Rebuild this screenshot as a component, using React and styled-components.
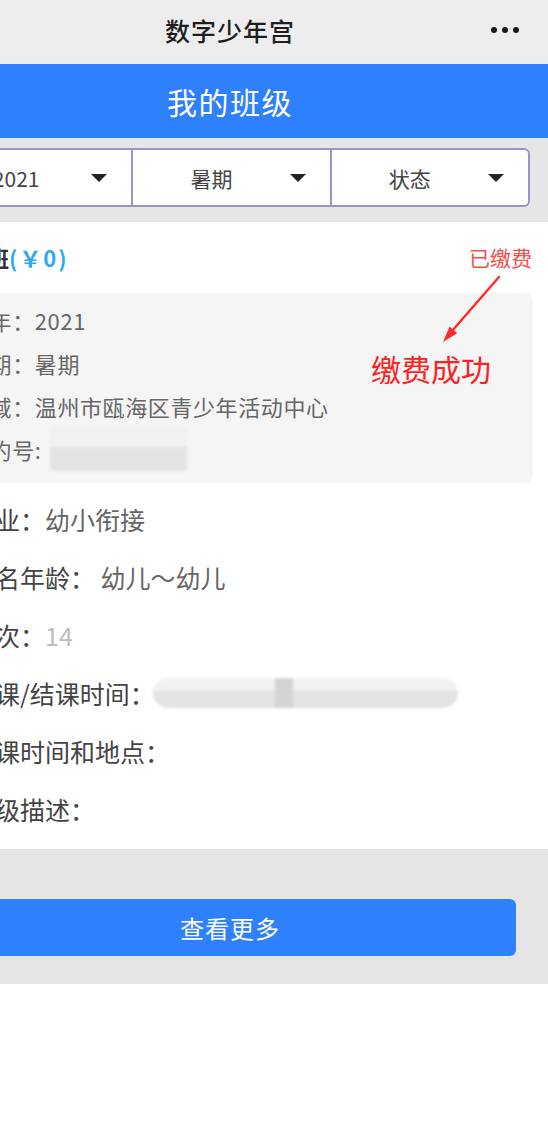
import React from 'react'
import styled, { createGlobalStyle } from 'styled-components'

const GlobalStyle = createGlobalStyle`
    body{
        margin:0;
        background:#ffffff;
        font-family:"Noto Sans CJK SC","Noto Sans",sans-serif;
    }
`

const infoRows = [
    { label: '学年：', value: '2021' },
    { label: '学期：', value: '暑期' },
    { label: '区域：', value: '温州市瓯海区青少年活动中心' },
    { label: '预约号:', value: null },
]

const detailRows = [
    { label: '专业：', value: '幼小衔接' },
    { label: '报名年龄：', value: ' 幼儿～幼儿' },
    { label: '课次：', value: '14', light: true },
    { label: '开课/结课时间：', blur: true },
    { label: '上课时间和地点：' },
    { label: '班级描述：' },
]

const filters = ['2021', '暑期', '状态']

function App() {
    return (
        <Viewport>
            <GlobalStyle />
            <Page>
                <TitleBar>
                    <span />
                    <h1>数字少年宫</h1>
                    <Dots><i /><i /><i /></Dots>
                </TitleBar>
                <Header>我的班级</Header>
                <FilterArea>
                    <FilterBox>
                        {filters.map((f) => (
                            <FilterCell key={f}>
                                <span>{f}</span>
                                <Caret />
                            </FilterCell>
                        ))}
                    </FilterBox>
                </FilterArea>
                <Card>
                    <CardHead>
                        <h2>暑期班<em>(￥0)</em></h2>
                        <Status>已缴费</Status>
                    </CardHead>
                    <InfoBox>
                        {infoRows.map((r) => (
                            <InfoRow key={r.label}>
                                <span>{r.label}</span>
                                {r.value ? <span>{r.value}</span> : <Mosaic $w={137} $h={44} />}
                            </InfoRow>
                        ))}
                    </InfoBox>
                    <Details>
                        {detailRows.map((r) => (
                            <DetailRow key={r.label}>
                                <span>{r.label}</span>
                                {r.value && <Value $light={r.light}>{r.value}</Value>}
                                {r.blur && <Mosaic $w={305} $h={30} $round $mark />}
                            </DetailRow>
                        ))}
                    </Details>
                    <ArrowMark viewBox="0 0 80 80" width="80" height="80">
                        <line x1="67" y1="5" x2="20" y2="59" stroke="#ff2a2a" strokeWidth="2.4" strokeLinecap="round" />
                        <polygon points="11,70 25.2,61.3 17.6,54.6" fill="#ff2a2a" />
                    </ArrowMark>
                    <Note>缴费成功</Note>
                </Card>
                <Footer>
                    <MoreButton>查看更多</MoreButton>
                </Footer>
            </Page>
        </Viewport>
    )
}

const Viewport = styled.div`
    width:548px;
    height:1121px;
    overflow:hidden;
    background:#ffffff;
`
const Page = styled.div`
    width:636px;
    margin-left:-88px;
`
const TitleBar = styled.div`
    height:64px;
    background:#ededed;
    display:grid;
    grid-template-columns:1fr auto 1fr;
    align-items:center;
    h1{
        margin:0 0 5px 0;
        font-size:25px;
        font-weight:500;
        color:#1e1e1e;
        letter-spacing:1px;
    }
`
const Dots = styled.div`
    justify-self:end;
    margin:0 29px 5px 0;
    display:flex;
    gap:5px;
    i{
        width:6px;
        height:6px;
        border-radius:50%;
        background:#1a1a1a;
    }
`
const Header = styled.div`
    height:74px;
    background:#2f80fc;
    color:#ffffff;
    display:flex;
    align-items:center;
    justify-content:center;
    font-size:30px;
    letter-spacing:1.5px;
`
const FilterArea = styled.div`
    background:#e6e6e6;
    padding:10px 18px 15px 19px;
`
const FilterBox = styled.div`
    height:59px;
    box-sizing:border-box;
    background:#ffffff;
    border:2px solid #9896c8;
    border-radius:6px;
    display:grid;
    grid-template-columns:repeat(3, 1fr);
`
const FilterCell = styled.div`
    display:flex;
    align-items:center;
    padding-right:24px;
    &:first-child{
        padding-left:8px;
    }
    & + &{
        border-left:2px solid #9896c8;
    }
    span{
        flex:1;
        text-align:center;
        font-size:21px;
        color:#444;
    }
`
const Caret = styled.div`
    width:0;
    height:0;
    border-left:8px solid transparent;
    border-right:8px solid transparent;
    border-top:8px solid #222;
`
const Card = styled.div`
    position:relative;
    background:#ffffff;
    padding:20px 15px 11px 15px;
`
const CardHead = styled.div`
    display:flex;
    justify-content:space-between;
    align-items:center;
    height:30px;
    padding-left:16px;
    h2{
        margin:0;
        font-size:22px;
        font-weight:700;
        color:#333;
        em{
            font-style:normal;
            color:#2ea8f2;
            letter-spacing:2px;
        }
    }
`
const Status = styled.span`
    font-size:21px;
    color:#f0504c;
    margin-right:1px;
`
const InfoBox = styled.div`
    margin-top:21px;
    background:#f5f5f5;
    border-radius:8px;
    padding:5px 0 13px 40px;
`
const InfoRow = styled.div`
    height:43px;
    display:flex;
    align-items:center;
    font-size:22px;
    letter-spacing:0.6px;
    color:#666;
    & > div{
        margin-left:8px;
    }
`
const Mosaic = styled.div`
    width:${props => props.$w}px;
    height:${props => props.$h}px;
    border-radius:${props => props.$round ? '15px' : '4px'};
    filter:blur(1.5px);
    background:
        ${props => props.$mark ? 'linear-gradient(90deg, transparent 40%, #d4d4d4 40%, #d4d4d4 46%, transparent 46%),' : ''}
        linear-gradient(180deg, #f1f1f1 0%, #f1f1f1 45%, #e3e3e3 45%, #e3e3e3 100%);
`
const Details = styled.div`
    margin-top:7px;
    padding-left:43px;
`
const DetailRow = styled.div`
    height:58px;
    display:flex;
    align-items:center;
    font-size:25px;
    color:#444;
    white-space:pre;
    & > div{
        margin-left:-2px;
    }
`
const Value = styled.span`
    color:${props => props.$light ? '#bdbdbd' : '#666'};
`
const ArrowMark = styled.svg`
    position:absolute;
    left:520px;
    top:50px;
`
const Note = styled.div`
    position:absolute;
    left:459px;
    top:128px;
    font-size:30px;
    line-height:36px;
    color:#ff2020;
`
const Footer = styled.div`
    background:#e5e5e5;
    padding:50px 32px 28px 32px;
`
const MoreButton = styled.div`
    height:57px;
    border-radius:6px;
    background:#2f80fc;
    color:#ffffff;
    display:flex;
    align-items:center;
    justify-content:center;
    font-size:24px;
    letter-spacing:1px;
`

export default App
